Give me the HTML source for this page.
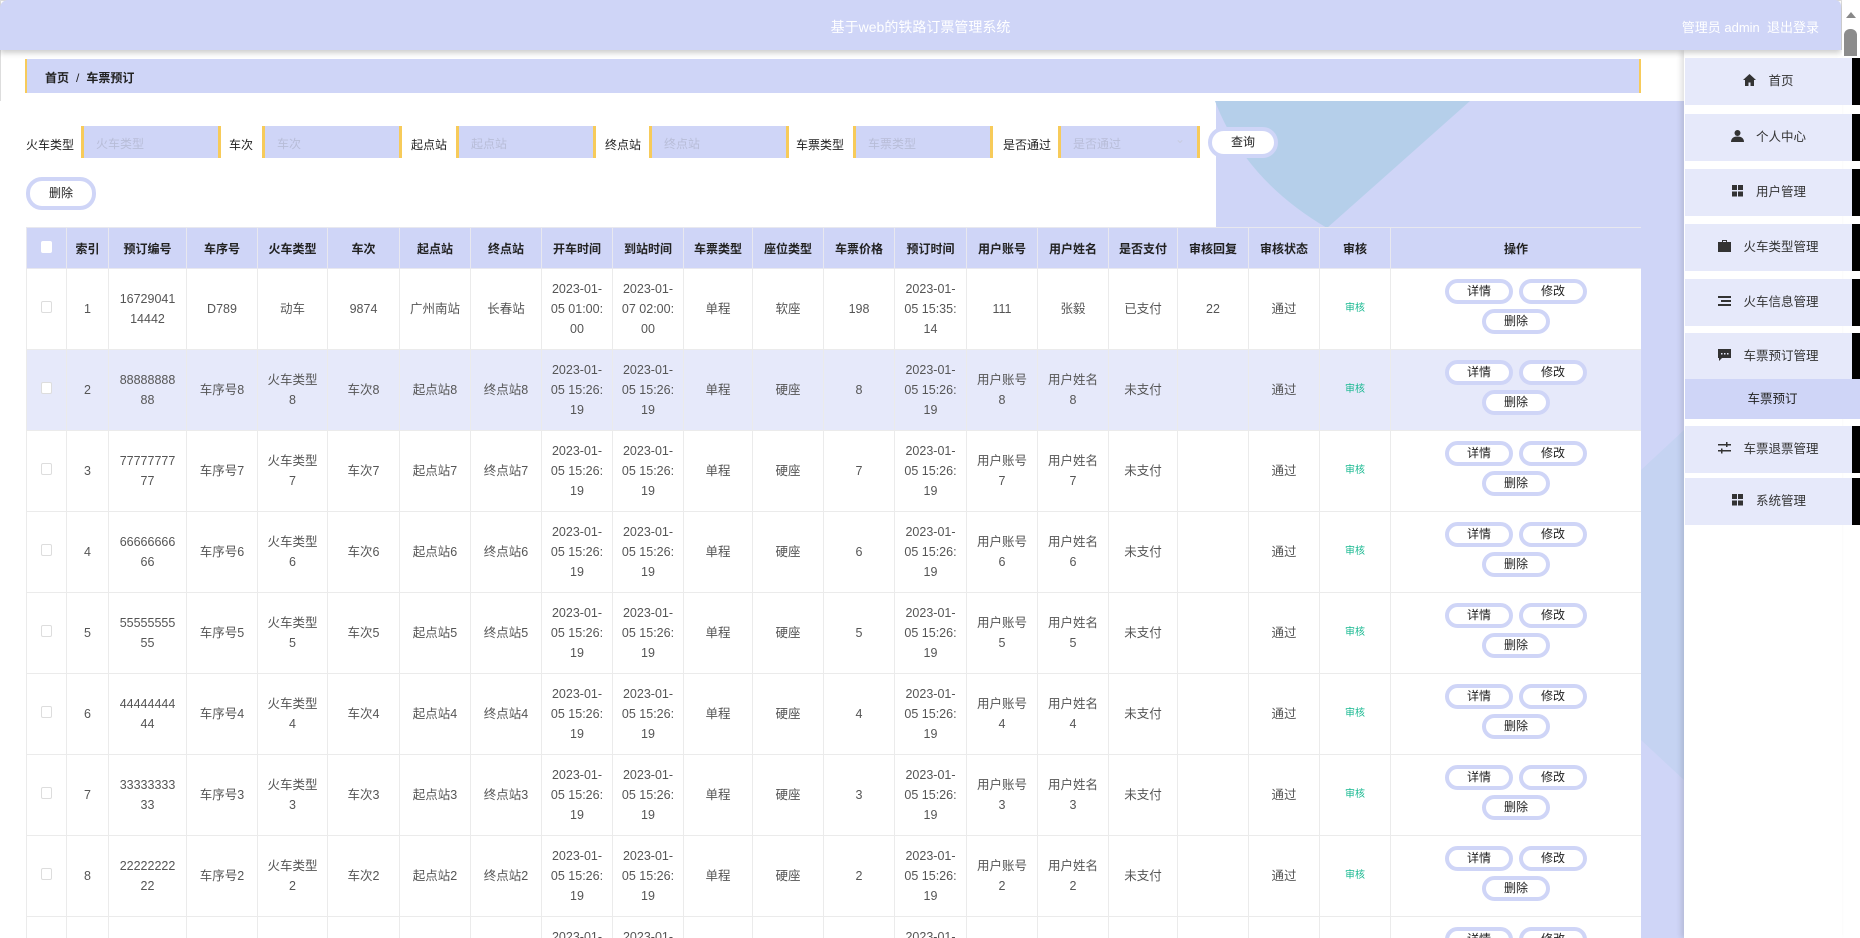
<!DOCTYPE html>
<html><head><meta charset="utf-8"><style>
*{box-sizing:border-box;margin:0;padding:0}
html{width:1860px;height:938px;overflow:hidden}
body{width:1860px;height:938px;overflow:hidden;background:#fff;font-family:"Liberation Sans","Noto Sans CJK SC",sans-serif;font-size:13px;color:#333;position:relative}
.page{position:absolute;left:0;top:0;width:1842px;height:938px;border:1px solid #ddd;border-radius:0 0 10px 10px}
.bg{position:absolute;left:0;top:0}
.hdr{position:absolute;left:0;top:0;width:1841px;height:50px;background:#cfd5f7;border-radius:8px 6px 0 0;box-shadow:0 3px 6px rgba(0,0,0,.2);z-index:5}
.hdr .t{position:absolute;left:0;right:0;top:17px;text-align:center;color:#fff;font-size:14px}
.hdr .r{position:absolute;right:22px;top:17px;color:#fff;font-size:13px}
.sb{position:absolute;left:1842px;top:0;width:18px;height:56px;background:#fff;z-index:6}
.sb .a{position:absolute;left:4px;top:12px;width:0;height:0;border-left:5px solid transparent;border-right:5px solid transparent;border-bottom:6px solid #888}
.sb .th{position:absolute;left:2px;top:29px;width:13px;height:27px;background:#8c8c8c;border-radius:6px 6px 0 0}
.bc{position:absolute;left:25px;top:59px;width:1616px;height:34px;background:#cfd5f7;border-left:2px solid #f7cb5a;border-right:2px solid #f7cb5a;font-size:12px;font-weight:bold;color:#222;padding:10px 0 0 18px}
.bc span{font-weight:normal;margin:0 7px}
.lbl{position:absolute;top:136px;font-size:12px;color:#222}
.inp{position:absolute;top:126px;height:32px;background:#cfd5f7;border-left:3px solid #f7cb5a;border-right:3px solid #f7cb5a;color:#b8bdd8;font-size:12px;padding:9px 0 0 12px}
.btn{position:absolute;background:#fff;border:4px solid #cfd5f7;border-radius:16px;text-align:center;font-size:12px;color:#222}
.tw{position:absolute;left:26px;top:227px;width:1615px;height:711px;overflow:hidden}
table{border-collapse:collapse;table-layout:fixed;width:1615px;background:#fff}
th{height:41px;background:#cfd5f7;border:1px solid #e8e8ef;font-size:12px;font-weight:bold;color:#222}
td{height:81px;border:1px solid #ebebeb;text-align:center;color:#555;font-size:12.5px;line-height:20px;padding:0 2px}
tr.s td{background:#e6e9fa}
.cb{display:inline-block;width:11px;height:12px;border:1px solid #ddd;background:#fff;border-radius:2px}
th .cb{border-color:#fff}
.g{color:#17b890;font-size:10px}
.ob{display:inline-block;width:68px;height:25px;border:4px solid #cfd5f7;border-radius:13px;font-size:12px;color:#222;line-height:17px;background:#fff;margin:0 3px}
.ops{line-height:0}
.ops div{height:30px;line-height:0}
.side{position:absolute;left:1684px;top:50px;width:158px;height:888px;background:#fff;box-shadow:-3px 0 5px rgba(0,0,0,.12)}
.it{position:absolute;left:1685px;width:167px;height:47px;background:#e6e9fa;text-align:center;font-size:12.5px;color:#333;line-height:47px;z-index:7}
.it:after{content:"";position:absolute;left:167px;top:0;width:8px;height:47px;background:#000}
.sub{position:absolute;left:1685px;width:175px;top:379px;height:40px;background:#cfd5f7;text-align:center;line-height:40px;font-size:12.5px;color:#222;z-index:7}
</style></head><body>
<div class="page"></div>
<svg class="bg" width="1684" height="938">
<polygon points="1216,101 1684,101 1684,938 1216,938" fill="#cfd5f7"/>
<path d="M1215,101 Q1245,180 1327,228 L1470,101 Z" fill="#b5cfea"/>
<polygon points="1641,470 1684,430 1684,780 1641,740" fill="#c5d3f2"/>
<rect x="0" y="101" width="1215" height="837" fill="#fff"/>
</svg>
<div class="hdr"><div class="t">基于web的铁路订票管理系统</div><div class="r">管理员 admin&nbsp;&nbsp;退出登录</div></div>
<div class="sb"><div class="a"></div><div class="th"></div></div>
<div class="bc">首页<span>/</span>车票预订</div>

<div class="lbl" style="left:26px">火车类型</div><div class="inp" style="left:81px;width:140px">火车类型</div>
<div class="lbl" style="left:229px">车次</div><div class="inp" style="left:262px;width:140px">车次</div>
<div class="lbl" style="left:411px">起点站</div><div class="inp" style="left:456px;width:140px">起点站</div>
<div class="lbl" style="left:605px">终点站</div><div class="inp" style="left:649px;width:140px">终点站</div>
<div class="lbl" style="left:796px">车票类型</div><div class="inp" style="left:853px;width:140px">车票类型</div>
<div class="lbl" style="left:1003px">是否通过</div><div class="inp" style="left:1058px;width:142px">是否通过<span style="position:absolute;right:12px;top:6px;color:#c8cce0">&#8964;</span></div>
<div class="btn" style="left:1208px;top:127px;width:70px;height:31px;line-height:23px">查询</div>
<div class="btn" style="left:26px;top:177px;width:70px;height:33px;line-height:25px">删除</div>

<div class="tw"><table>
<colgroup><col style="width:40px"><col style="width:42px"><col style="width:78px"><col style="width:71px"><col style="width:70px"><col style="width:72px"><col style="width:71px"><col style="width:71px"><col style="width:71px"><col style="width:71px"><col style="width:69px"><col style="width:71px"><col style="width:71px"><col style="width:72px"><col style="width:71px"><col style="width:71px"><col style="width:69px"><col style="width:71px"><col style="width:71px"><col style="width:71px"><col style="width:251px"></colgroup>
<tr><th><span class="cb"></span></th><th>索引</th><th>预订编号</th><th>车序号</th><th>火车类型</th><th>车次</th><th>起点站</th><th>终点站</th><th>开车时间</th><th>到站时间</th><th>车票类型</th><th>座位类型</th><th>车票价格</th><th>预订时间</th><th>用户账号</th><th>用户姓名</th><th>是否支付</th><th>审核回复</th><th>审核状态</th><th>审核</th><th>操作</th></tr>
<tr><td><span class="cb"></span></td><td>1</td><td>16729041<br>14442</td><td>D789</td><td>动车</td><td>9874</td><td>广州南站</td><td>长春站</td><td>2023-01-<br>05 01:00:<br>00</td><td>2023-01-<br>07 02:00:<br>00</td><td>单程</td><td>软座</td><td>198</td><td>2023-01-<br>05 15:35:<br>14</td><td>111</td><td>张毅</td><td>已支付</td><td>22</td><td>通过</td><td class="g">审核</td><td class="ops"><div><span class="ob">详情</span><span class="ob">修改</span></div><div><span class="ob">删除</span></div></td></tr>
<tr class="s"><td><span class="cb"></span></td><td>2</td><td>88888888<br>88</td><td>车序号8</td><td>火车类型<br>8</td><td>车次8</td><td>起点站8</td><td>终点站8</td><td>2023-01-<br>05 15:26:<br>19</td><td>2023-01-<br>05 15:26:<br>19</td><td>单程</td><td>硬座</td><td>8</td><td>2023-01-<br>05 15:26:<br>19</td><td>用户账号<br>8</td><td>用户姓名<br>8</td><td>未支付</td><td></td><td>通过</td><td class="g">审核</td><td class="ops"><div><span class="ob">详情</span><span class="ob">修改</span></div><div><span class="ob">删除</span></div></td></tr>
<tr><td><span class="cb"></span></td><td>3</td><td>77777777<br>77</td><td>车序号7</td><td>火车类型<br>7</td><td>车次7</td><td>起点站7</td><td>终点站7</td><td>2023-01-<br>05 15:26:<br>19</td><td>2023-01-<br>05 15:26:<br>19</td><td>单程</td><td>硬座</td><td>7</td><td>2023-01-<br>05 15:26:<br>19</td><td>用户账号<br>7</td><td>用户姓名<br>7</td><td>未支付</td><td></td><td>通过</td><td class="g">审核</td><td class="ops"><div><span class="ob">详情</span><span class="ob">修改</span></div><div><span class="ob">删除</span></div></td></tr>
<tr><td><span class="cb"></span></td><td>4</td><td>66666666<br>66</td><td>车序号6</td><td>火车类型<br>6</td><td>车次6</td><td>起点站6</td><td>终点站6</td><td>2023-01-<br>05 15:26:<br>19</td><td>2023-01-<br>05 15:26:<br>19</td><td>单程</td><td>硬座</td><td>6</td><td>2023-01-<br>05 15:26:<br>19</td><td>用户账号<br>6</td><td>用户姓名<br>6</td><td>未支付</td><td></td><td>通过</td><td class="g">审核</td><td class="ops"><div><span class="ob">详情</span><span class="ob">修改</span></div><div><span class="ob">删除</span></div></td></tr>
<tr><td><span class="cb"></span></td><td>5</td><td>55555555<br>55</td><td>车序号5</td><td>火车类型<br>5</td><td>车次5</td><td>起点站5</td><td>终点站5</td><td>2023-01-<br>05 15:26:<br>19</td><td>2023-01-<br>05 15:26:<br>19</td><td>单程</td><td>硬座</td><td>5</td><td>2023-01-<br>05 15:26:<br>19</td><td>用户账号<br>5</td><td>用户姓名<br>5</td><td>未支付</td><td></td><td>通过</td><td class="g">审核</td><td class="ops"><div><span class="ob">详情</span><span class="ob">修改</span></div><div><span class="ob">删除</span></div></td></tr>
<tr><td><span class="cb"></span></td><td>6</td><td>44444444<br>44</td><td>车序号4</td><td>火车类型<br>4</td><td>车次4</td><td>起点站4</td><td>终点站4</td><td>2023-01-<br>05 15:26:<br>19</td><td>2023-01-<br>05 15:26:<br>19</td><td>单程</td><td>硬座</td><td>4</td><td>2023-01-<br>05 15:26:<br>19</td><td>用户账号<br>4</td><td>用户姓名<br>4</td><td>未支付</td><td></td><td>通过</td><td class="g">审核</td><td class="ops"><div><span class="ob">详情</span><span class="ob">修改</span></div><div><span class="ob">删除</span></div></td></tr>
<tr><td><span class="cb"></span></td><td>7</td><td>33333333<br>33</td><td>车序号3</td><td>火车类型<br>3</td><td>车次3</td><td>起点站3</td><td>终点站3</td><td>2023-01-<br>05 15:26:<br>19</td><td>2023-01-<br>05 15:26:<br>19</td><td>单程</td><td>硬座</td><td>3</td><td>2023-01-<br>05 15:26:<br>19</td><td>用户账号<br>3</td><td>用户姓名<br>3</td><td>未支付</td><td></td><td>通过</td><td class="g">审核</td><td class="ops"><div><span class="ob">详情</span><span class="ob">修改</span></div><div><span class="ob">删除</span></div></td></tr>
<tr><td><span class="cb"></span></td><td>8</td><td>22222222<br>22</td><td>车序号2</td><td>火车类型<br>2</td><td>车次2</td><td>起点站2</td><td>终点站2</td><td>2023-01-<br>05 15:26:<br>19</td><td>2023-01-<br>05 15:26:<br>19</td><td>单程</td><td>硬座</td><td>2</td><td>2023-01-<br>05 15:26:<br>19</td><td>用户账号<br>2</td><td>用户姓名<br>2</td><td>未支付</td><td></td><td>通过</td><td class="g">审核</td><td class="ops"><div><span class="ob">详情</span><span class="ob">修改</span></div><div><span class="ob">删除</span></div></td></tr>
<tr><td><span class="cb"></span></td><td>9</td><td>11111111<br>11</td><td>车序号1</td><td>火车类型<br>1</td><td>车次1</td><td>起点站1</td><td>终点站1</td><td>2023-01-<br>05 15:26:<br>19</td><td>2023-01-<br>05 15:26:<br>19</td><td>单程</td><td>硬座</td><td>1</td><td>2023-01-<br>05 15:26:<br>19</td><td>用户账号<br>1</td><td>用户姓名<br>1</td><td>未支付</td><td></td><td>通过</td><td class="g">审核</td><td class="ops"><div><span class="ob">详情</span><span class="ob">修改</span></div><div><span class="ob">删除</span></div></td></tr>
</table></div>

<div class="side"></div>
<div class="it" style="top:58px"><svg width="13" height="12" viewBox="0 0 13 12" style="margin-right:12px;vertical-align:-1px"><path d="M6.5 0L0 6h2v6h3.5V8.5h2V12H11V6h2z" fill="#333"/></svg>首页</div>
<div class="it" style="top:114px"><svg width="13" height="12" viewBox="0 0 13 12" style="margin-right:12px;vertical-align:-1px"><circle cx="6.5" cy="3" r="3" fill="#333"/><path d="M0 12c0-4 3-5.5 6.5-5.5S13 8 13 12z" fill="#333"/></svg>个人中心</div>
<div class="it" style="top:169px"><svg width="13" height="12" viewBox="0 0 13 12" style="margin-right:12px;vertical-align:-1px"><rect x="1" y="0" width="5" height="5" fill="#333"/><rect x="7" y="0" width="5" height="5" fill="#333"/><rect x="1" y="6.5" width="5" height="5" fill="#333"/><rect x="7" y="6.5" width="5" height="5" fill="#333"/></svg>用户管理</div>
<div class="it" style="top:224px"><svg width="13" height="12" viewBox="0 0 13 12" style="margin-right:12px;vertical-align:-1px"><path d="M4 2V0h5v2h4v10H0V2zM5 1v1h3V1z" fill="#333"/></svg>火车类型管理</div>
<div class="it" style="top:279px"><svg width="13" height="12" viewBox="0 0 13 12" style="margin-right:12px;vertical-align:-1px"><rect x="0" y="1" width="13" height="2" fill="#333"/><rect x="3" y="5" width="10" height="2" fill="#333"/><rect x="0" y="9" width="13" height="2" fill="#333"/></svg>火车信息管理</div>
<div class="it" style="top:333px"><svg width="13" height="12" viewBox="0 0 13 12" style="margin-right:12px;vertical-align:-1px"><path d="M0 0h13v9H4l-3 3V9H0z" fill="#333"/><rect x="3" y="4" width="1.5" height="1.5" fill="#e6e9fa"/><rect x="6" y="4" width="1.5" height="1.5" fill="#e6e9fa"/><rect x="9" y="4" width="1.5" height="1.5" fill="#e6e9fa"/></svg>车票预订管理</div>
<div class="sub">车票预订</div>
<div class="it" style="top:426px"><svg width="13" height="12" viewBox="0 0 13 12" style="margin-right:12px;vertical-align:-1px"><rect x="0" y="2" width="13" height="1.5" fill="#333"/><rect x="0" y="8" width="13" height="1.5" fill="#333"/><rect x="8" y="0" width="1.5" height="5" fill="#333"/><rect x="3" y="6.5" width="1.5" height="5" fill="#333"/></svg>车票退票管理</div>
<div class="it" style="top:478px"><svg width="13" height="12" viewBox="0 0 13 12" style="margin-right:12px;vertical-align:-1px"><rect x="1" y="0" width="5" height="5" fill="#333"/><rect x="7" y="0" width="5" height="5" fill="#333"/><rect x="1" y="6.5" width="5" height="5" fill="#333"/><rect x="7" y="6.5" width="5" height="5" fill="#333"/></svg>系统管理</div>
</body></html>
